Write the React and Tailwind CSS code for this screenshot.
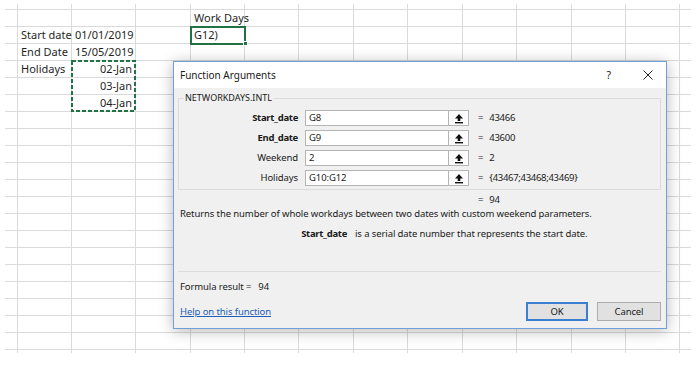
import React from "react";

const colW = [
  "w-[13px]",
  "w-[54px]",
  "w-[64px]",
  "w-[55px]",
  "w-[54px]",
  "w-[54px]",
  "w-[55px]",
  "w-[54px]",
  "w-[55px]",
  "w-[54px]",
  "w-[55px]",
  "w-[54px]",
  "w-[54px]",
  "w-[11px]",
];

const sheetFont = { fontFamily: '"Noto Sans", "Open Sans", sans-serif' };

function cellContent(r, c) {
  const t = "text-[11px] leading-[16px] text-[#1f1f1f] whitespace-nowrap px-[3px]";
  if (r === 1 && c === 4) return <div className={t}>Work Days</div>;
  if (r === 2 && c === 1) return <div className={t}>Start date</div>;
  if (r === 2 && c === 2) return <div className={t}>01/01/2019</div>;
  if (r === 2 && c === 4)
    return (
      <div className="relative h-full">
        <div className={t}>G12)</div>
        <div className="absolute -left-[1px] -top-[1px] w-[56px] h-[19px] border-2 border-[#217346]" />
        <div className="absolute left-[52px] top-[14px] w-[5px] h-[5px] bg-[#217346] border border-white" />
      </div>
    );
  if (r === 3 && c === 1) return <div className={t}>End Date</div>;
  if (r === 3 && c === 2) return <div className={t}>15/05/2019</div>;
  if (r === 4 && c === 1) return <div className={t}>Holidays</div>;
  if (r === 4 && c === 2)
    return (
      <div className="relative h-full">
        <div className={t + " text-right"}>02-Jan</div>
        <svg
          className="absolute -left-[1px] -top-[1px]"
          width="65"
          height="52"
          viewBox="0 0 65 52"
        >
          <rect
            x="1"
            y="1"
            width="63"
            height="50"
            fill="none"
            stroke="#217346"
            strokeWidth="2"
            strokeDasharray="4 2"
          />
        </svg>
      </div>
    );
  if (r === 5 && c === 2) return <div className={t + " text-right"}>03-Jan</div>;
  if (r === 6 && c === 2) return <div className={t + " text-right"}>04-Jan</div>;
  return null;
}

function Sheet() {
  const rows = [];
  rows.push(
    <div key="r0" className="flex h-[6px]">
      {colW.map((w, c) => (
        <div
          key={c}
          className={`${w} shrink-0 border-b border-[#dadada] ${c < colW.length - 1 ? "border-r" : ""}`}
        />
      ))}
    </div>
  );
  for (let r = 1; r <= 20; r++) {
    rows.push(
      <div key={"r" + r} className="flex h-[17px]">
        {colW.map((w, c) => (
          <div
            key={c}
            className={`${w} shrink-0 border-b border-[#dadada] ${c < colW.length - 1 ? "border-r" : ""}`}
          >
            {cellContent(r, c)}
          </div>
        ))}
      </div>
    );
  }
  rows.push(
    <div key="tail" className="flex h-[3px]">
      {colW.map((w, c) => (
        <div
          key={c}
          className={`${w} shrink-0 border-[#dadada] ${c < colW.length - 1 ? "border-r" : ""}`}
        />
      ))}
    </div>
  );
  return (
    <div className="ml-[5px] pt-[4px] flex flex-col" style={sheetFont}>
      {rows}
    </div>
  );
}

function RefIcon() {
  return (
    <svg width="10" height="11" viewBox="0 0 10 11">
      <path d="M5 1 L9 5.5 L6.3 5.5 L6.3 8 L3.7 8 L3.7 5.5 L1 5.5 Z" fill="#111" />
      <rect x="1" y="9" width="8" height="1.4" fill="#111" />
    </svg>
  );
}

const dt = "text-[9.5px] leading-[12px] tracking-[-0.1px] text-[#1a1a1a]";

function ArgRow({ label, bold, value, result }) {
  return (
    <div className="flex items-center h-[16px]">
      <div className={`w-[119px] text-right ${dt} ${bold ? "font-bold tracking-[-0.3px]" : ""}`}>
        {label}
      </div>
      <div className={`ml-[7px] w-[144px] h-[16px] bg-white border border-[#b4b4b4] flex items-center pl-[3px] ${dt}`}>
        {value}
      </div>
      <div className="w-[20px] h-[16px] bg-[#fbfbfb] border border-[#b4b4b4] border-l-0 flex items-center justify-center">
        <RefIcon />
      </div>
      <div className={`ml-[9px] ${dt}`}>=</div>
      <div className={`ml-[6px] ${dt} tracking-[-0.3px]`}>{result}</div>
    </div>
  );
}

function Dialog() {
  return (
    <div className="absolute left-[173px] top-[61px] w-[494px] h-[268px] border border-[#6f9fd6] bg-[#f0f0f0] flex flex-col shadow-[0_2px_14px_rgba(0,0,0,0.28)]">
      <div className="h-[26px] bg-white flex items-center pl-[6px] pr-[13px] shrink-0">
        <div className="text-[10px] leading-[14px] text-[#1a1a1a]">Function Arguments</div>
        <div className="ml-auto text-[10.5px] leading-[14px] text-[#1a1a1a]">?</div>
        <svg className="ml-[32px]" width="10" height="10" viewBox="0 0 10 10">
          <path d="M0.5 0.5 L9.5 9.5 M9.5 0.5 L0.5 9.5" stroke="#222" strokeWidth="1" />
        </svg>
      </div>
      <div className="flex-1 flex flex-col pl-[4px] pr-[5px] pt-[4px]">
        <fieldset className="border border-[#dcdcdc] pb-[3px]">
          <legend className="ml-[5px] px-[1px] text-[9px] leading-[12px] text-[#1a1a1a]">
            NETWORKDAYS.INTL
          </legend>
          <div className="pt-[6px] flex flex-col gap-[4px]">
            <ArgRow label="Start_date" bold value="G8" result="43466" />
            <ArgRow label="End_date" bold value="G9" result="43600" />
            <ArgRow label="Weekend" value="2" result="2" />
            <ArgRow label="Holidays" value="G10:G12" result="{43467;43468;43469}" />
          </div>
        </fieldset>
        <div className={`mt-[4px] flex ${dt}`}>
          <div className="w-[300px]" />
          <div>=</div>
          <div className="ml-[6px] tracking-[-0.3px]">94</div>
        </div>
        <div className={`mt-[2px] pl-[2px] whitespace-nowrap ${dt}`}>
          Returns the number of whole workdays between two dates with custom weekend parameters.
        </div>
        <div className={`mt-[8px] flex whitespace-nowrap ${dt}`}>
          <div className="w-[169px] text-right font-bold tracking-[-0.3px]">Start_date</div>
          <div className="ml-[8px]">is a serial date number that represents the start date.</div>
        </div>
        <div className="mt-[31px] h-[1px] bg-[#dcdcdc]" />
        <div className={`mt-[9px] pl-[2px] flex whitespace-nowrap ${dt}`}>
          <div>Formula result =</div>
          <div className="ml-[7px]">94</div>
        </div>
        <div className="mt-[9px] flex items-center">
          <div className="pl-[2px] text-[9.5px] leading-[12px] tracking-[-0.1px] text-[#1e5fb4] underline whitespace-nowrap">
            Help on this function
          </div>
          <div className={`ml-auto w-[62px] h-[19px] border-2 border-[#3c7fd1] bg-[#e1e1e1] flex items-center justify-center ${dt}`}>
            OK
          </div>
          <div className={`ml-[9px] w-[64px] h-[19px] border border-[#adadad] bg-[#e1e1e1] flex items-center justify-center ${dt}`}>
            Cancel
          </div>
        </div>
      </div>
    </div>
  );
}

export default function App() {
  return (
    <div
      className="relative w-[698px] h-[365px] bg-white overflow-hidden"
      style={{ fontFamily: '"Noto Sans", "Open Sans", sans-serif' }}
    >
      <Sheet />
      <Dialog />
    </div>
  );
}
